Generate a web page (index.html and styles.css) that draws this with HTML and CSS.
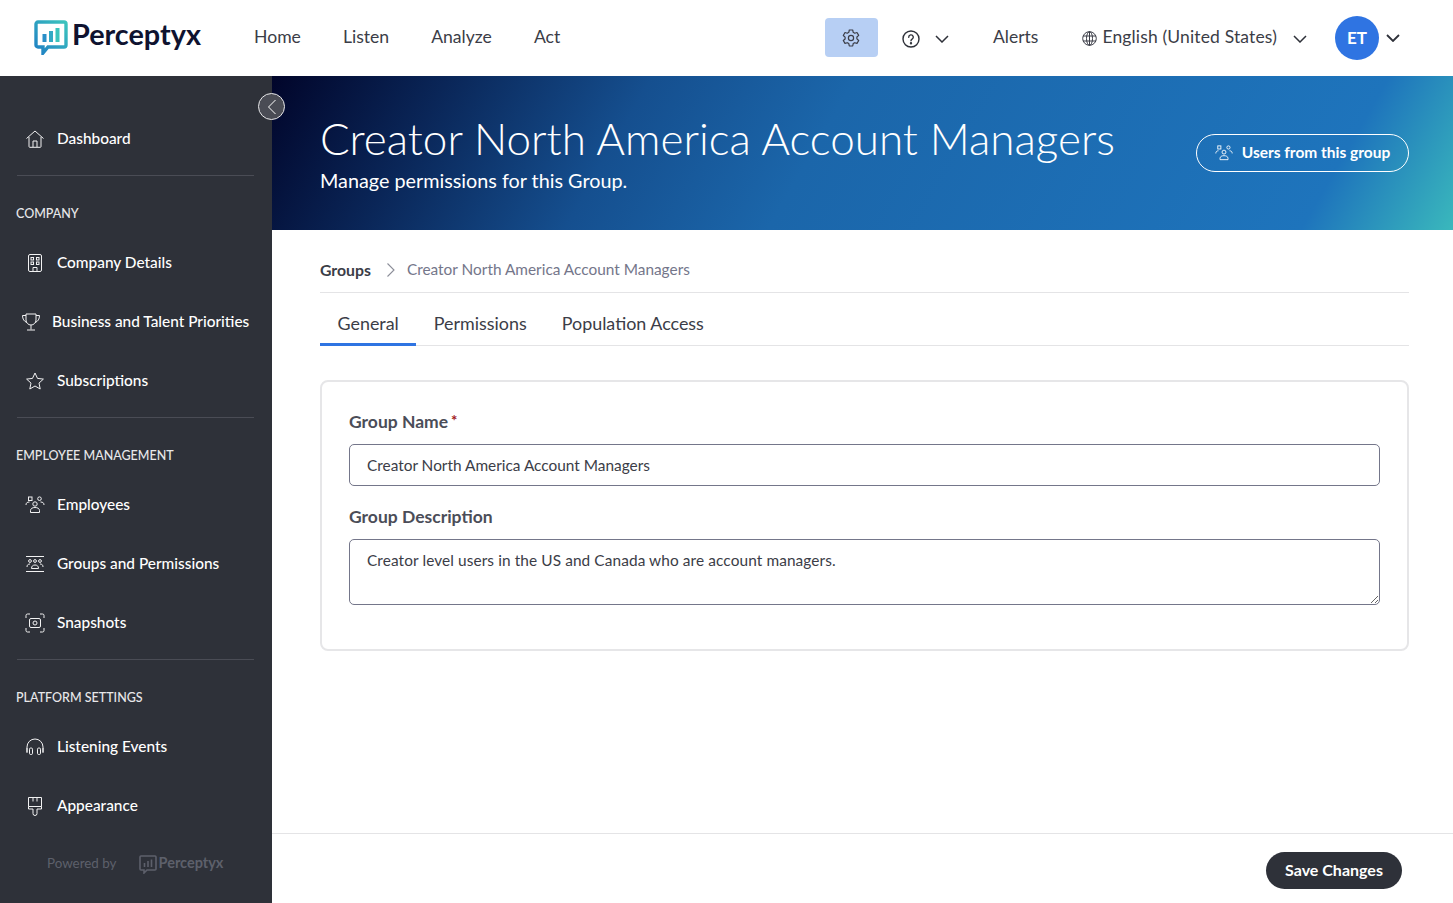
FILE: index.html
```html
<!DOCTYPE html>
<html lang="en">
<head>
<meta charset="utf-8">
<title>Creator North America Account Managers</title>
<link rel="stylesheet" href="styles.css">
</head>
<body>
<header class="topbar">
  <a class="logo">
    <svg class="logo-mark" width="34" height="35" viewBox="0 0 34 35">
      <defs><linearGradient id="lg" x1="0" y1="1" x2="1" y2="0"><stop offset="0" stop-color="#1f7fc4"/><stop offset="1" stop-color="#3cc4bd"/></linearGradient></defs>
      <path d="M4 2h26a2 2 0 0 1 2 2v21a2 2 0 0 1-2 2H14l-5 6v-6H4a2 2 0 0 1-2-2V4a2 2 0 0 1 2-2z" fill="#fff" stroke="url(#lg)" stroke-width="3.4"/>
      <rect x="8.500" y="14" width="4" height="8" fill="#2a8fc8"/><rect x="15" y="11" width="4" height="11" fill="#33a9c4"/><rect x="21.500" y="8" width="4" height="14" fill="#3cc4bd"/>
    </svg>
    <span class="logo-text">Perceptyx</span>
  </a>
  <nav class="mainnav"><a>Home</a><a>Listen</a><a>Analyze</a><a>Act</a></nav>
  <div class="tools">
    <button class="gear" aria-label="Settings">
      <svg width="20" height="20" viewBox="0 0 20 20" fill="none" stroke="#3b3d47" stroke-width="1.200"><path d="M8.300 2h3.400l.5 2.300 1.500.9 2.300-.7 1.700 2.900-1.800 1.600v1.900l1.800 1.600-1.700 2.900-2.300-.7-1.500.9-.5 2.400H8.300l-.5-2.400-1.500-.9-2.300.7-1.700-2.900L4.100 11V9.100L2.300 7.500 4 4.500l2.300.7 1.500-.9z" stroke-linejoin="round"/><circle cx="10" cy="10" r="2.600"/></svg>
    </button>
    <span class="help">
      <svg width="18" height="18" viewBox="0 0 18 18" fill="none" stroke="#2e3139" stroke-width="1.400"><circle cx="9" cy="9" r="8"/><path d="M6.700 7.200a2.300 2.300 0 1 1 3.400 2c-.8.500-1.100.9-1.100 1.600" stroke-linecap="round"/><circle cx="9" cy="13.200" r=".5" fill="#2e3139"/></svg>
      <svg class="chev" width="14" height="8" viewBox="0 0 14 8" fill="none" stroke="#2e3139" stroke-width="1.500"><path d="M1 1l6 6 6-6"/></svg>
    </span>
    <a class="alerts">Alerts</a>
    <span class="lang">
      <svg width="15" height="15" viewBox="0 0 15 15" fill="none" stroke="#3b3d47" stroke-width="1"><circle cx="7.500" cy="7.500" r="6.800"/><ellipse cx="7.500" cy="7.500" rx="3" ry="6.800"/><path d="M1 5h13M1 10h13M7.500 .7v13.600"/></svg>
      <span class="lang-text">English (United States)</span>
      <svg class="chev" width="14" height="8" viewBox="0 0 14 8" fill="none" stroke="#2e3139" stroke-width="1.500"><path d="M1 1l6 6 6-6"/></svg>
    </span>
    <span class="user">
      <span class="avatar">ET</span>
      <svg width="14" height="8" viewBox="0 0 14 8" fill="none" stroke="#2e3139" stroke-width="1.800"><path d="M1 1l6 6 6-6"/></svg>
    </span>
  </div>
</header>

<div class="shell">
  <aside class="sidebar">
    <button class="collapse" aria-label="Collapse">
      <svg width="10" height="16" viewBox="0 0 10 16" fill="none" stroke="#fff" stroke-width="1"><path d="M8.500 1L1.500 8l7 7"/></svg>
    </button>
    <a class="side-item">
      <svg class="side-icon" viewBox="0 0 20 20"><path d="M1.500 9.500L10 2l8.500 7.500M4 8v9.500a.8.800 0 0 0 .8.800h10.400a.8.800 0 0 0 .8-.8V8M8 18v-6h4v6"/></svg>
      <span>Dashboard</span>
    </a>
    <section class="side-section">
      <h3>COMPANY</h3>
      <a class="side-item">
        <svg class="side-icon" viewBox="0 0 20 20"><rect x="3.500" y="1.500" width="13" height="17" rx="1.500"/><rect x="6" y="4.500" width="2.500" height="2.500"/><rect x="11.500" y="4.500" width="2.500" height="2.500"/><rect x="6" y="9" width="2.500" height="2.500"/><rect x="11.500" y="9" width="2.500" height="2.500"/><path d="M8 18.500V14.500h4v4"/></svg>
        <span>Company Details</span>
      </a>
      <a class="side-item wide">
        <svg class="side-icon" viewBox="0 0 20 20"><path d="M5 2h10v6a5 5 0 0 1-10 0zM5 3.500H1.500c0 3.500 1.500 6 4.500 7M15 3.500h3.500c0 3.500-1.500 6-4.500 7M10 13v4.500M6 18h8"/></svg>
        <span>Business and Talent Priorities</span>
      </a>
      <a class="side-item">
        <svg class="side-icon" viewBox="0 0 20 20"><path d="M10 2l2.500 5.400 5.900.7-4.400 4 1.200 5.900-5.200-3-5.200 3 1.200-5.900-4.400-4 5.900-.7z" stroke-linejoin="round"/></svg>
        <span>Subscriptions</span>
      </a>
    </section>
    <section class="side-section">
      <h3>EMPLOYEE MANAGEMENT</h3>
      <a class="side-item">
        <svg class="side-icon" viewBox="0 0 20 20"><rect x="3.500" y="2" width="3.500" height="3.500"/><circle cx="14.500" cy="3.700" r="1.800"/><circle cx="10" cy="9" r="2.200"/><path d="M1 10c0-2 1-3 3.500-3M19 10c0-2-1-3-3.500-3M5.500 17.500v-2c0-2 2-3 4.500-3s4.500 1 4.500 3v2z"/></svg>
        <span>Employees</span>
      </a>
      <a class="side-item">
        <svg class="side-icon" viewBox="0 0 20 20"><path d="M1 2.500h18M1 17.500h18"/><circle cx="5" cy="7" r="1.400"/><circle cx="10" cy="7" r="1.400"/><circle cx="15" cy="7" r="1.400"/><path d="M2 13c0-2 1-3 3-3M18 13c0-2-1-3-3-3M6.500 14.500c0-2.500 1.500-3.500 3.500-3.500s3.500 1 3.500 3.500z"/></svg>
        <span>Groups and Permissions</span>
      </a>
      <a class="side-item">
        <svg class="side-icon" viewBox="0 0 20 20"><path d="M1 5V2.500A1.500 1.500 0 0 1 2.500 1H5M15 1h2.500A1.500 1.500 0 0 1 19 2.500V5M19 15v2.500a1.500 1.500 0 0 1-1.500 1.500H15M5 19H2.500A1.500 1.500 0 0 1 1 17.500V15"/><rect x="4.500" y="5.500" width="11" height="9" rx="1.500"/><circle cx="10" cy="10" r="2"/></svg>
        <span>Snapshots</span>
      </a>
    </section>
    <section class="side-section">
      <h3>PLATFORM SETTINGS</h3>
      <a class="side-item">
        <svg class="side-icon" viewBox="0 0 20 20"><path d="M2 15v-5a8 8 0 0 1 16 0v5"/><rect x="4.500" y="11" width="3" height="6.500" rx="1.200"/><rect x="12.500" y="11" width="3" height="6.500" rx="1.200"/><path d="M2 11v5M18 11v5"/></svg>
        <span>Listening Events</span>
      </a>
      <a class="side-item">
        <svg class="side-icon" viewBox="0 0 20 20"><path d="M3.500 1.500h13v9h-13zM3.500 10.500v2.500h4.500v4.500a2 2 0 0 0 4 0V13h4.500v-2.500M8 1.500v4M12 1.500v4"/></svg>
        <span>Appearance</span>
      </a>
    </section>
    <div class="powered">
      <span class="powered-by">Powered by</span>
      <svg width="18" height="19" viewBox="0 0 18 19" fill="none" stroke="#5d606b" stroke-width="1.600"><path d="M2 1h14a1 1 0 0 1 1 1v12a1 1 0 0 1-1 1H8l-3 3v-3H2a1 1 0 0 1-1-1V2a1 1 0 0 1 1-1z"/><path d="M5.500 8v4M9 6v6M12.500 4.500V12"/></svg>
      <span class="powered-logo">Perceptyx</span>
    </div>
  </aside>

  <main class="main">
    <section class="banner">
      <div class="banner-text">
        <h1>Creator North America Account Managers</h1>
        <p>Manage permissions for this Group.</p>
      </div>
      <a class="users-btn">
        <svg width="18" height="16" viewBox="0 0 20 18" fill="none" stroke="#fff" stroke-width="1"><rect x="3" y="1" width="3.500" height="3.500"/><circle cx="15" cy="2.800" r="1.800"/><circle cx="10" cy="8" r="2.200"/><path d="M.8 9.500c0-2 1-3 3-3M19.200 9.500c0-2-1-3-3-3M5.500 16.500v-1.500c0-2 2-3 4.500-3s4.500 1 4.500 3v1.500z"/></svg>
        <span>Users from this group</span>
      </a>
    </section>
    <div class="content">
      <div class="breadcrumb">
        <a class="crumb-root">Groups</a>
        <svg class="crumb-sep" width="10" height="16" viewBox="0 0 10 16" fill="none" stroke="#8b8d98" stroke-width="1.100"><path d="M1.500 1.500L8 8l-6.500 6.500"/></svg>
        <span class="crumb-current">Creator North America Account Managers</span>
      </div>
      <div class="tabs">
        <a class="tab active">General</a>
        <a class="tab">Permissions</a>
        <a class="tab">Population Access</a>
      </div>
      <form class="card">
        <label class="field-label" for="gname">Group Name<span class="req">*</span></label>
        <input class="text-input" id="gname" type="text" value="Creator North America Account Managers">
        <label class="field-label second" for="gdesc">Group Description</label>
        <textarea class="text-area" id="gdesc">Creator level users in the US and Canada who are account managers.</textarea>
      </form>
    </div>
    <footer class="footer"><button class="save">Save Changes</button></footer>
  </main>
</div>
</body>
</html>
```
FILE: styles.css
```css
* { box-sizing: border-box; }
html, body { height: 100%; }
body {
  margin: 0;
  height: 903px;
  overflow: hidden;
  display: flex;
  flex-direction: column;
  font-family: "Lato", "Liberation Sans", sans-serif;
  color: #3b3d47;
  background: #fff;
}
a { color: inherit; text-decoration: none; }

.topbar { height: 76px; flex: none; display: flex; align-items: center; padding: 0 0 1px 34px; background: #fff; }
.logo { display: flex; align-items: center; width: 220px; gap: 4px; }
.logo-mark { flex: none; }
.logo-text { font-size: 28.800px; font-weight: 700; color: #0f1330; line-height: 1; padding-bottom: 6px; }
.mainnav { display: flex; gap: 42px; font-size: 17.600px; color: #3b3d47; padding-bottom: 3px; }
.tools { margin-left: auto; display: flex; align-items: center; padding-right: 53px; font-size: 17.500px; }
.gear { width: 53px; height: 39px; border: 0; border-radius: 4px; background: #b7cff4; display: flex; align-items: center; justify-content: center; padding: 0; }
.help { display: flex; align-items: center; gap: 15px; margin-left: 24px; margin-top: 3px; }
.alerts { margin-left: 44px; padding-bottom: 3px; }
.lang { display: flex; align-items: center; margin-left: 44px; }
.lang svg:first-child { margin-top: 2px; margin-right: 5px; }
.lang-text { padding-bottom: 3px; letter-spacing: .15px; }
.lang .chev { margin-left: 16px; margin-top: 2px; }
.user { display: flex; align-items: center; gap: 7px; margin-left: 28px; }
.avatar { width: 44px; height: 44px; border-radius: 50%; background: #2f74e2; color: #fff; display: flex; align-items: center; justify-content: center; font-weight: 700; font-size: 17px; padding-bottom: 1px; }

.shell { flex: 1; display: flex; min-height: 0; }
.sidebar { position: relative; width: 272px; flex: none; background: #2e3139; color: #fff; padding: 34px 18px 0 17px; }
.collapse { position: absolute; left: 258px; top: 17px; width: 27px; height: 27px; border-radius: 50%; background: #4a4c55; border: 1px solid #e8e8ea; padding: 0; display: flex; align-items: center; justify-content: center; z-index: 2; }
.side-item { height: 59px; display: flex; align-items: center; gap: 12px; padding-left: 8px; font-size: 15.400px; font-weight: 500; color: #fff; }
.side-item span { padding-bottom: 4px; }
.side-item.wide { padding-left: 4px; gap: 11px; }
.side-icon { width: 20px; height: 20px; flex: none; fill: none; stroke: #f2f2f3; stroke-width: 1; margin-bottom: 1px; }
.side-section { border-top: 1px solid #4a4c55; margin-top: 6px; padding-top: 28px; }
.side-section h3 { margin: 0 0 10px -1px; font-size: 12.500px; line-height: 20px; font-weight: 500; color: #e8e8ea; }
.powered { display: flex; align-items: center; padding: 18px 0 0 30px; color: #5d606b; }
.powered-by { font-size: 13.400px; margin-right: 22px; color: #5d606b; padding-bottom: 3px; }
.powered-logo { font-size: 14.500px; font-weight: 700; margin-left: 2px; padding-bottom: 4px; }

.main { flex: 1; min-width: 0; display: flex; flex-direction: column; }
.banner {
  height: 154px; flex: none; display: flex; align-items: center; justify-content: space-between;
  padding: 0 44px 2px 48px; color: #fff;
  background: linear-gradient(120deg, #01052a 0%, #0a2658 14%, #154f8f 30%, #1b66aa 46%, #1e74bc 88%, #3ab8bc 100%);
}
.banner h1 { margin: 0 0 2px; font-size: 44px; font-weight: 300; line-height: 54px; }
.banner p { margin: 0; font-size: 19.800px; line-height: 26px; }
.users-btn { width: 213px; height: 38px; margin-top: 2px; border: 1px solid #fff; border-radius: 19px; display: flex; align-items: center; justify-content: center; gap: 9px; font-size: 15.500px; font-weight: 700; }
.users-btn span { padding-bottom: 2px; }

.content { flex: 1; padding: 0 44px 0 48px; }
.breadcrumb { height: 63px; display: flex; align-items: center; gap: 16px; padding-top: 16px; border-bottom: 1px solid #e4e4e6; font-size: 15.400px; }
.crumb-root { font-weight: 700; color: #3b3d47; font-size: 15.800px; }
.crumb-sep { margin-left: -1px; margin-top: 1px; }
.crumb-current { color: #74768a; margin-left: -5px; }
.tabs { display: flex; height: 53px; border-bottom: 1px solid #e4e4e6; font-size: 17.900px; }
.tab { display: flex; align-items: center; justify-content: center; padding: 7px 17.500px 0; height: 53px; color: #3b3d47; }
.tab.active { border-bottom: 3px solid #2f74e2; padding-top: 10px; }
.card { margin-top: 34px; height: 271px; border: 2px solid #e6e6e8; border-radius: 8px; padding: 26px 27px 0 27px; display: flex; flex-direction: column; }
.field-label { font-size: 17.500px; font-weight: 700; line-height: 24px; color: #4b4d58; margin-bottom: 10px; }
.field-label.second { margin-top: 19px; margin-bottom: 10px; }
.req { color: #a11a22; font-size: 15px; vertical-align: 2px; margin-left: 3px; }
.text-input, .text-area { width: 100%; border: 1px solid #74768a; border-radius: 5px; font-family: inherit; font-size: 15.400px; color: #3b3d47; padding: 0 17px; background: #fff; outline: none; display: block; }
.text-input { height: 42px; flex: none; }
.text-area { height: 66px; flex: none; padding-top: 10px; resize: vertical; line-height: 20px; letter-spacing: .1px; }

.footer { height: 70px; flex: none; border-top: 1px solid #e4e4e6; display: flex; justify-content: flex-end; align-items: flex-start; padding: 18px 51px 0 0; }
.save { width: 136px; height: 37px; border: 0; border-radius: 19px; background: #2e3139; color: #fff; font-family: inherit; font-size: 16px; font-weight: 700; padding: 0 0 2px; }
```
